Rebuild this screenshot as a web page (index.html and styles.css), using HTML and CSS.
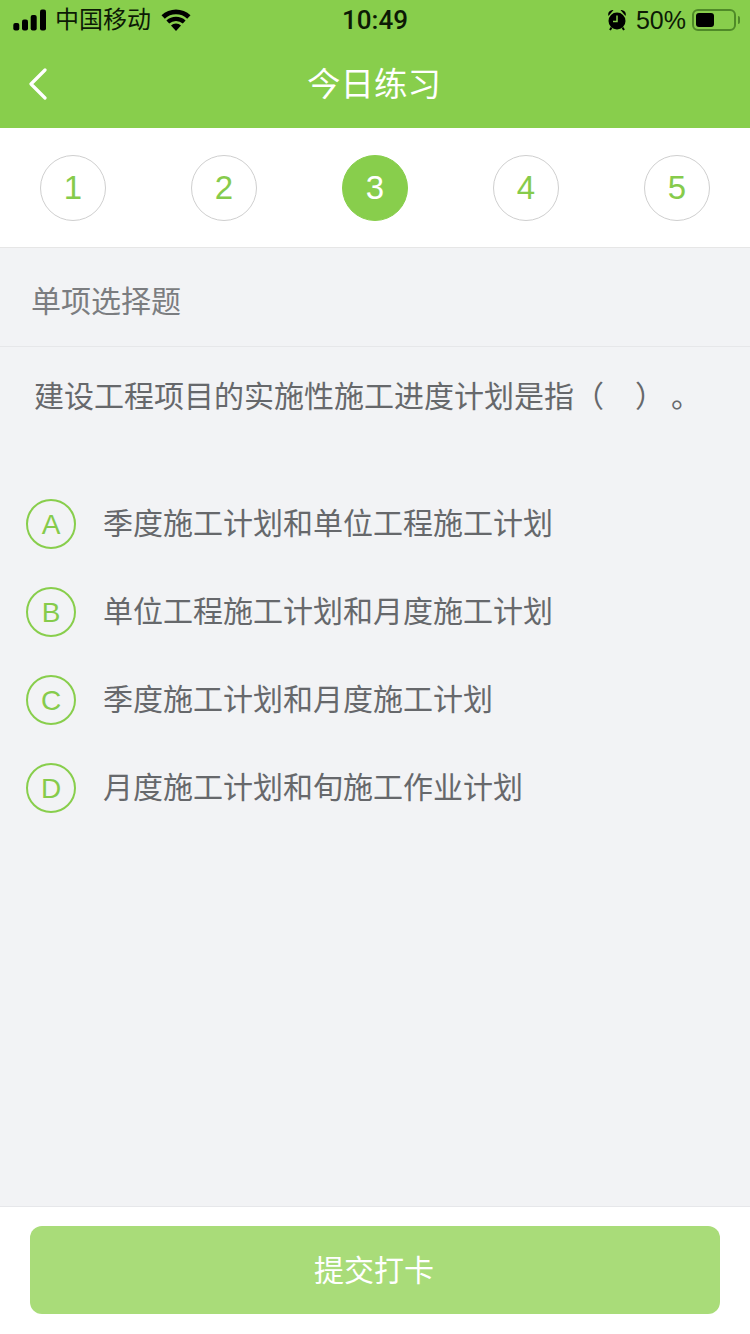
FILE: index.html
```html
<!DOCTYPE html>
<html lang="zh-CN">
<head>
<meta charset="utf-8">
<title>今日练习</title>
<link rel="stylesheet" href="styles.css">
</head>
<body>
<div class="page">
  <header class="head">
    <div class="status">
      <div class="status-left">
        <svg class="signal" width="34" height="22" viewBox="0 0 34 22"><rect x="0.300" y="14" width="6" height="7.500" rx="2"/><rect x="9" y="10.500" width="6" height="11" rx="2"/><rect x="17.700" y="6" width="6" height="15.500" rx="2"/><rect x="27" y="0.500" width="6" height="21" rx="2"/></svg>
        <span class="carrier">中国移动</span>
        <svg class="wifi" width="30" height="22" viewBox="0 0 30 22"><path d="M15 22l-5-5.500a7 7 0 0 1 10 0z"/><path d="M8.200 14.500l-2.800-3a14.200 14.200 0 0 1 19.200 0l-2.800 3a10.200 10.200 0 0 0-13.600 0z"/><path d="M3.800 9.700L.5 6.200a21 21 0 0 1 29 0l-3.300 3.500a16.400 16.400 0 0 0-22.400 0z"/></svg>
      </div>
      <div class="time">10:49</div>
      <div class="status-right">
        <svg class="alarm" width="18" height="22" viewBox="1 0 18 22"><circle cx="10" cy="12" r="8.500"/><path d="M1.500 7a4.500 4.500 0 0 1 5-6zM18.500 7a4.500 4.500 0 0 0-5-6z"/><path d="M4.500 18.500l-1.500 2.500M15.500 18.500l1.500 2.500" stroke="#000" stroke-width="2"/><path d="M10 6.500V12.500H6" fill="none" stroke="#88ce4c" stroke-width="1.500"/></svg>
        <span class="pct">50%</span>
        <span class="battery"><span class="battery-fill"></span></span>
        <span class="battery-cap"></span>
      </div>
    </div>
    <div class="nav">
      <svg class="back" width="20" height="32" viewBox="0 0 20 32"><path d="M17 2 3 16 17 30" fill="none" stroke="#fff" stroke-width="3.200" stroke-linecap="round" stroke-linejoin="round"/></svg>
      <h1 class="title">今日练习</h1>
    </div>
  </header>

  <nav class="steps">
    <span class="step">1</span>
    <span class="step">2</span>
    <span class="step step-on">3</span>
    <span class="step">4</span>
    <span class="step">5</span>
  </nav>

  <main class="body">
    <div class="kind">单项选择题</div>
    <p class="question">建设工程项目的实施性施工进度计划是指（<span class="blank"></span>）<span class="tail">。</span></p>
    <ul class="options">
      <li class="option"><span class="mark">A</span><span class="option-text">季度施工计划和单位工程施工计划</span></li>
      <li class="option"><span class="mark">B</span><span class="option-text">单位工程施工计划和月度施工计划</span></li>
      <li class="option"><span class="mark">C</span><span class="option-text">季度施工计划和月度施工计划</span></li>
      <li class="option"><span class="mark">D</span><span class="option-text">月度施工计划和旬施工作业计划</span></li>
    </ul>
  </main>

  <footer class="foot">
    <button class="submit" type="button">提交打卡</button>
  </footer>
</div>
</body>
</html>
```
FILE: styles.css
```css
* { box-sizing: border-box; }
html, body { margin: 0; padding: 0; }
body { font-family: "Liberation Sans", "Noto Sans CJK SC", sans-serif; }
.page { width: 750px; height: 1334px; display: flex; flex-direction: column; background: #f2f3f5; overflow: hidden; }

.head { height: 128px; background: #88ce4c; flex: none; }
.status { height: 40px; padding: 0 10px 0 13px; display: flex; align-items: center; justify-content: space-between; position: relative; color: #0c1a05; }
.status-left { display: flex; align-items: center; }
.signal { margin-right: 8px; }
.carrier { font-size: 24px; line-height: 40px; }
.wifi { margin-left: 10px; }
.time { position: absolute; left: 0; right: 0; text-align: center; font-family: Roboto, "Liberation Sans", sans-serif; font-weight: 500; font-size: 26px; line-height: 40px; pointer-events: none; }
.status-right { display: flex; align-items: center; }
.pct { font-size: 25px; line-height: 40px; margin-left: 10px; }
.battery { width: 44px; height: 22px; margin-left: 6px; padding: 2px; border: 2px solid #4f8a28; border-radius: 6px; display: block; }
.battery-fill { display: block; width: 18px; height: 14px; background: #000; border-radius: 3px; }
.battery-cap { width: 2px; height: 8px; margin-left: 2px; background: #4f8a28; border-radius: 0 2px 2px 0; }

.nav { height: 88px; padding: 0 0 0 28px; display: flex; align-items: center; position: relative; }
.back { flex: none; }
.title { position: absolute; left: 0; right: 0; margin: 0; padding: 2px 2px 0 0; text-align: center; font-size: 33.500px; line-height: 86px; font-weight: 400; color: #fff; }

.steps { height: 120px; flex: none; padding: 0 40px; display: flex; align-items: center; justify-content: space-between; background: #fff; border-bottom: 1px solid #e6e6e6; }
.step { width: 66px; height: 66px; border: 1px solid #cfcfcf; border-radius: 50%; display: flex; align-items: center; justify-content: center; font-size: 33px; color: #86cb4b; }
.step-on { background: #88ce4c; border-color: #88ce4c; color: #fff; }

.body { flex: 1; min-height: 0; }
.kind { height: 99px; padding: 0 30px 0 31px; border-bottom: 1px solid #e6e7e9; font-size: 30px; line-height: 108px; color: #7b7d80; }
.question { margin: 0; padding: 33px 0 0 34px; font-size: 30px; line-height: 34px; color: #66686b; white-space: nowrap; }
.blank { display: inline-block; width: 31px; }
.tail { display: inline-block; margin-left: 6px; }
.options { list-style: none; margin: 85px 0 0; padding: 0 0 0 26px; display: flex; flex-direction: column; gap: 38px; }
.option { height: 50px; display: flex; align-items: center; gap: 26px; font-size: 30px; color: #66686b; white-space: nowrap; }
.option-text { padding: 0 0 6px 1px; }
.mark { flex: none; width: 50px; height: 50px; padding-top: 2px; border: 2px solid #88ce4c; border-radius: 50%; display: flex; align-items: center; justify-content: center; font-size: 28px; color: #86cb4b; }

.foot { height: 128px; flex: none; padding: 19px 30px 0; background: #fff; border-top: 1px solid #e6e7ea; }
.submit { display: block; width: 690px; height: 88px; padding: 0 2px 4px 0; border: 0; border-radius: 12px; background: #a9dc79; color: #fff; font: inherit; font-size: 30px; }
```
